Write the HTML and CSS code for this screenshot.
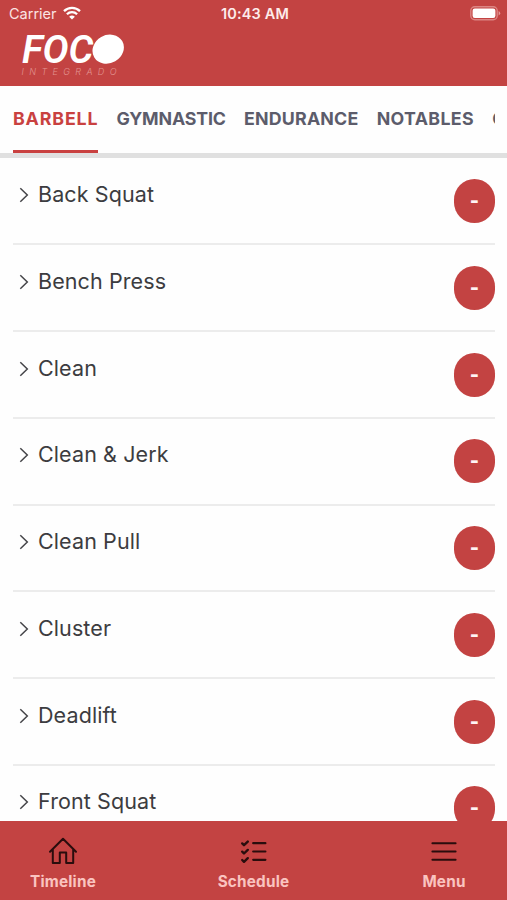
FILE: index.html
```
<!DOCTYPE html>
<html lang="en">
<head>
    <meta charset="UTF-8">
    <meta name="viewport" content="width=device-width, initial-scale=1.0">
    <title>Foco Integrado</title>
    <link rel="stylesheet" href="styles.css">
</head>
<body>

    <header>
        <div class="status-bar">
            <div class="carrier">
                <span>Carrier</span>
                <svg class="wifi" viewBox="0 0 18 14" width="18" height="14">
                    <path d="M1 5.2a11.5 11.5 0 0 1 16 0M3.9 8.2a7.3 7.3 0 0 1 10.2 0" fill="none" stroke="#fff" stroke-width="2.3"/>
                    <path d="M9 13.6L6.1 10.8a4.2 4.2 0 0 1 5.8 0z" fill="#fff"/>
                </svg>
            </div>
            <div class="time">10:43 AM</div>
            <svg class="battery" viewBox="0 0 31 15" width="31" height="15">
                <rect x="0.8" y="0.8" width="26.4" height="13" rx="4" fill="none" stroke="#dc8583" stroke-width="1.4"/>
                <rect x="2.6" y="2.6" width="22.8" height="9.4" rx="2.2" fill="#fff"/>
                <path d="M28.6 5v4.6q1.6-.8 1.6-2.3T28.6 5z" fill="#e39a98"/>
            </svg>
        </div>
        <svg class="logo" viewBox="0 0 110 48" width="110" height="48">
            <text class="logo-name" y="33.2" x="2 22.5 48.5">FOC</text>
            <ellipse cx="88.2" cy="19.2" rx="16.2" ry="14" transform="rotate(-30 88.2 19.2)" fill="#fff"/>
            <text class="logo-sub" x="1.5" y="45" textLength="95">INTEGRADO</text>
        </svg>
    </header>

    <nav class="tabs">
        <div class="tab-list">
            <a class="tab barbell active">BARBELL</a>
            <a class="tab gymnastic">GYMNASTIC</a>
            <a class="tab endurance">ENDURANCE</a>
            <a class="tab notables">NOTABLES</a>
            <a class="tab">GIRLS</a>
        </div>
    </nav>

    <main id="list"></main>

    <footer>
        <a class="nav-item">
            <svg viewBox="0 0 30 30" width="30" height="30">
                <path d="M2 15.8L15 2.8l13 13M4.8 13.5V27h7V16.5h6.4V27h7V13.5" fill="none" stroke="#2a0d0d" stroke-width="2" stroke-linejoin="round" stroke-linecap="round"/>
            </svg>
            <span>Timeline</span>
        </a>
        <a class="nav-item">
            <svg viewBox="0 0 30 30" width="30" height="30">
                <path d="M14.2 7.2h12.2M14.2 15.5h12.2M14.2 23.8h12.2" stroke="#2a0d0d" stroke-width="2.2" stroke-linecap="round"/>
                <path d="M3.2 7.4l1.8 1.8 3.8-3.6M3.2 15.7l1.8 1.8 3.8-3.6M3.2 24l1.8 1.8 3.8-3.6" fill="none" stroke="#2a0d0d" stroke-width="2.4" stroke-linecap="round" stroke-linejoin="round"/>
            </svg>
            <span>Schedule</span>
        </a>
        <a class="nav-item">
            <svg viewBox="0 0 30 30" width="30" height="30">
                <path d="M3.4 7.2h23.2M3.4 15.5h23.2M3.4 23.8h23.2" stroke="#2a0d0d" stroke-width="2" stroke-linecap="round"/>
            </svg>
            <span>Menu</span>
        </a>
    </footer>

    <script>
let list = document.getElementById("list");
let lifts = ["Back Squat", "Bench Press", "Clean", "Clean & Jerk", "Clean Pull", "Cluster", "Deadlift", "Front Squat"];

lifts.forEach(lift => {
    let row = document.createElement("div");
    row.className = "row";
    row.innerHTML = `
        <svg class="chevron" viewBox="0 0 10 16" width="10" height="16">
            <path d="M1.3 1.3L8.3 8l-7 6.7" fill="none" stroke="#444448" stroke-width="1.5"/>
        </svg>
        <span class="lift"></span>
        <button class="value">-</button>`;
    row.querySelector(".lift").innerText = lift;
    list.appendChild(row);
});
    </script>

</body>
</html>
```
FILE: styles.css
```
* {
    padding: 0;
    margin: 0;
    box-sizing: border-box;
}

body {
    height: 100vh;
    display: flex;
    flex-direction: column;
    overflow: hidden;
    background-color: #fefefe;
    font-family: Inter, sans-serif;
    user-select: none;
}

header {
    height: 86px;
    flex: none;
    background-color: #c34342;
    color: white;
}

.status-bar {
    height: 28px;
    display: grid;
    grid-template-columns: 1fr auto 1fr;
    align-items: center;
    padding: 0 6px 1px 9px;
    font-size: 14.5px;
}

.carrier {
    display: flex;
    align-items: center;
    gap: 6px;
    color: #fbe4e3;
}

.wifi {
    margin-top: -2px;
}

.time {
    font-weight: 600;
    letter-spacing: 0.15px;
    color: #fdeceb;
}

.battery {
    justify-self: end;
}

.logo {
    display: block;
    margin: 2px 0 0 20px;
}

.logo-name {
    font-family: Roboto, sans-serif;
    font-size: 39px;
    font-weight: 600;
    font-style: italic;
    fill: white;
}

.logo-sub {
    font-size: 9px;
    font-weight: 300;
    font-style: italic;
    fill: #e29390;
}

.tabs {
    height: 72px;
    flex: none;
    padding: 0 12px 0 13px;
    border-bottom: 5px solid #e0e0e0;
}

.tab-list {
    height: 67px;
    display: flex;
    gap: 18.2px;
    overflow: hidden;
}

.tab {
    flex: none;
    height: 67px;
    line-height: 65px;
    font-size: 17.8px;
    font-weight: 700;
    color: #5c5c6b;
    white-space: nowrap;
}

.tab.active {
    color: #c94140;
    border-bottom: 3px solid #c94140;
}

.barbell {
    letter-spacing: 0.85px;
}

.gymnastic {
    letter-spacing: -0.15px;
}

.endurance {
    letter-spacing: 0.2px;
}

.notables {
    letter-spacing: 0.35px;
}

#list {
    flex: 1;
    min-height: 0;
    overflow: hidden;
    padding: 0.5px 12px 0 13px;
}

.row {
    height: 86.75px;
    display: flex;
    align-items: flex-start;
    border-bottom: 2px solid #ececec;
    padding: 20.5px 0 0 6px;
}

.chevron {
    margin: 8px 9px 0 0;
}

.lift {
    flex: 1;
    line-height: 31px;
    font-size: 21.5px;
    letter-spacing: 0.1px;
    color: #3c3c40;
}

.value {
    width: 41px;
    height: 44px;
    border: none;
    border-radius: 20.5px;
    background-color: #c34342;
    color: #fff5f5;
    font-family: Roboto, sans-serif;
    font-size: 24px;
    font-weight: 700;
}

footer {
    height: 79px;
    flex: none;
    display: flex;
    justify-content: space-between;
    padding: 0 9px;
    background-color: #c34342;
}

.nav-item {
    width: 108px;
    display: flex;
    flex-direction: column;
    align-items: center;
    padding-top: 15px;
    font-size: 15.3px;
    font-weight: 700;
    letter-spacing: 0.2px;
    line-height: 31px;
    color: #fac4c0;
}
```
